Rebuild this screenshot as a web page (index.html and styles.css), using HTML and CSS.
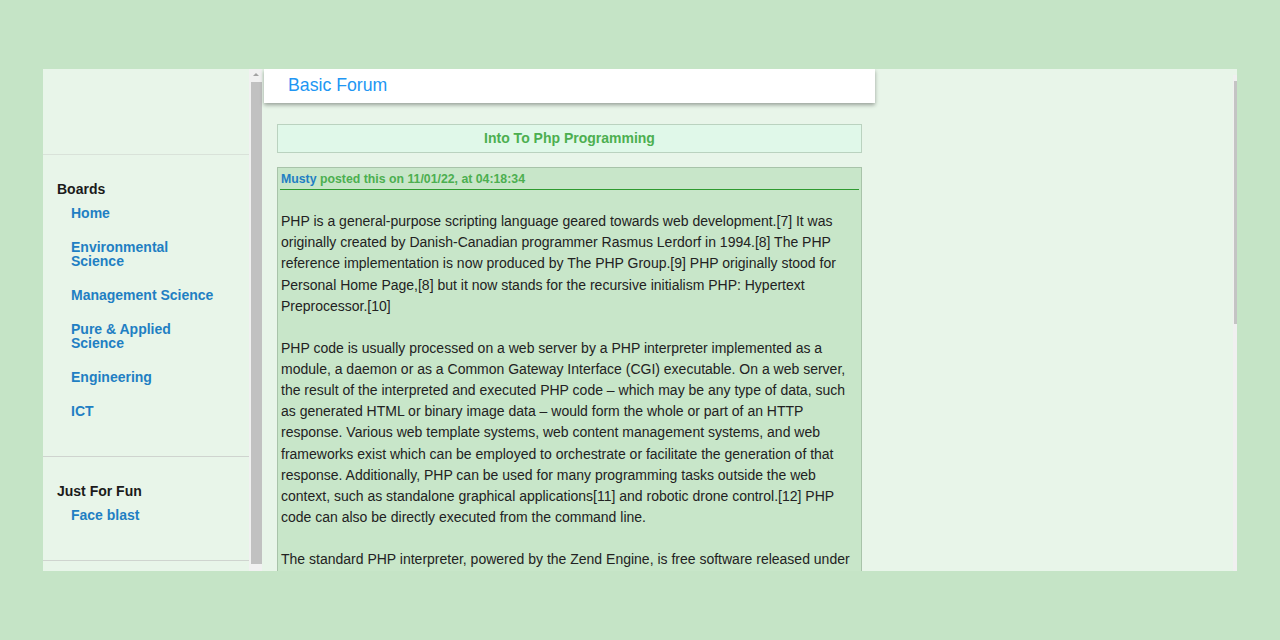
FILE: index.html
```html
<!DOCTYPE html>
<html lang="en">
<head>
<meta charset="utf-8">
<title>Basic Forum</title>
<link rel="stylesheet" href="styles.css">
</head>
<body>
<div class="frame">
  <aside class="sidebar">
    <div class="side-top"></div>
    <div class="side-section">
      <h3 class="side-heading">Boards</h3>
      <ul class="side-links">
        <li><a href="#">Home</a></li>
        <li><a href="#">Environmental Science</a></li>
        <li><a href="#">Management Science</a></li>
        <li><a href="#">Pure &amp; Applied Science</a></li>
        <li><a href="#">Engineering</a></li>
        <li><a href="#">ICT</a></li>
      </ul>
    </div>
    <div class="side-section">
      <h3 class="side-heading">Just For Fun</h3>
      <ul class="side-links">
        <li><a href="#">Face blast</a></li>
      </ul>
    </div>
  </aside>
  <div class="side-scroll">
    <div class="arrow-up"></div>
    <div class="thumb"></div>
  </div>
  <main class="main">
    <div class="column">
      <header class="topbar"><span class="brand">Basic Forum</span></header>
      <div class="content">
        <div class="topic-title">Into To Php Programming</div>
        <article class="post">
          <div class="post-head"><span class="author">Musty</span> posted this on 11/01/22, at 04:18:34</div>
          <div class="post-body">
            <p>PHP is a general-purpose scripting language geared towards web development.[7] It was originally created by Danish-Canadian programmer Rasmus Lerdorf in 1994.[8] The PHP reference implementation is now produced by The PHP Group.[9] PHP originally stood for Personal Home Page,[8] but it now stands for the recursive initialism PHP: Hypertext Preprocessor.[10]</p>
            <p>PHP code is usually processed on a web server by a PHP interpreter implemented as a module, a daemon or as a Common Gateway Interface (CGI) executable. On a web server, the result of the interpreted and executed PHP code – which may be any type of data, such as generated HTML or binary image data – would form the whole or part of an HTTP response. Various web template systems, web content management systems, and web frameworks exist which can be employed to orchestrate or facilitate the generation of that response. Additionally, PHP can be used for many programming tasks outside the web context, such as standalone graphical applications[11] and robotic drone control.[12] PHP code can also be directly executed from the command line.</p>
            <p>The standard PHP interpreter, powered by the Zend Engine, is free software released under the PHP License. PHP has been widely ported and can be deployed on most web servers on a variety of operating systems and platforms, free of charge.</p>
          </div>
        </article>
      </div>
    </div>
    <div class="main-scroll"><div class="main-thumb"></div></div>
  </main>
</div>
</body>
</html>
```
FILE: styles.css
```css
html, body {
  margin: 0;
  padding: 0;
}
body {
  background: #c5e4c6;
  font-family: "Liberation Sans", Arial, sans-serif;
  padding: 69px 0 0 43px;
  height: 640px;
  box-sizing: border-box;
  overflow: hidden;
}
.frame {
  width: 1194px;
  height: 502px;
  display: flex;
  overflow: hidden;
  background: #e8f5e9;
}
.sidebar {
  width: 206px;
  flex: none;
  background: #e8f5e9;
  display: flex;
  flex-direction: column;
}
.side-top {
  height: 85px;
  flex: none;
  border-bottom: 1px solid #d9e2d9;
}
.side-section {
  padding: 26px 0 38px 14px;
  border-bottom: 1px solid #cfd4cf;
}
.side-heading {
  margin: 0;
  font-size: 14px;
  line-height: 16px;
  font-weight: bold;
  color: #1b1b1b;
}
.side-links {
  list-style: none;
  margin: 9px 0 0;
  padding: 0 0 0 14px;
  display: flex;
  flex-direction: column;
  gap: 20px;
}
.side-links li {
  width: 150px;
  font-size: 14px;
  line-height: 14px;
}
.side-links a {
  color: #1f7fc3;
  font-weight: bold;
  text-decoration: none;
}
.side-scroll {
  width: 13px;
  flex: none;
  background: #f1f1f1;
  display: flex;
  flex-direction: column;
  align-items: flex-end;
}
.arrow-up {
  width: 0;
  height: 0;
  margin: 4px 3px 0 0;
  border-left: 3px solid transparent;
  border-right: 3px solid transparent;
  border-bottom: 3px solid #a3a3a3;
}
.thumb {
  width: 11px;
  height: 482px;
  margin-top: 6px;
  background: #c1c1c1;
}
.main {
  flex: 1;
  position: relative;
  background: #e8f5e9;
}
.column {
  width: 611px;
  margin-left: 2px;
}
.topbar {
  height: 34px;
  box-sizing: border-box;
  background: #ffffff;
  box-shadow: 0 2px 4px rgba(0, 0, 0, 0.35);
  display: flex;
  align-items: center;
  padding: 0 0 2px 24px;
}
.brand {
  font-size: 17.7px;
  color: #2196f3;
}
.content {
  padding: 21px 13px 0;
}
.topic-title {
  background: #e0f8e9;
  border: 1px solid #bad2bf;
  text-align: center;
  font-size: 14px;
  line-height: 27px;
  font-weight: bold;
  color: #4caf50;
}
.post {
  margin-top: 14px;
  background: #c8e6c9;
  border: 1px solid #a8c3a9;
  padding: 0 2px;
}
.post-head {
  font-size: 12.3px;
  line-height: 14px;
  font-weight: bold;
  color: #4caf50;
  padding: 4px 0 3px 1px;
  border-bottom: 1px solid #2f9a2f;
}
.author {
  color: #1f7fc3;
}
.post-body {
  padding: 0 1px;
  font-size: 14px;
  line-height: 21.125px;
  color: #222222;
}
.post-body p {
  margin: 21.125px 0;
}
.main-scroll {
  position: absolute;
  top: 6px;
  right: 0;
  width: 4px;
  bottom: 0;
  background: #f0f0f0;
}
.main-thumb {
  margin-top: 6px;
  width: 3px;
  margin-left: 1px;
  height: 243px;
  background: #c4c4c4;
}
```
